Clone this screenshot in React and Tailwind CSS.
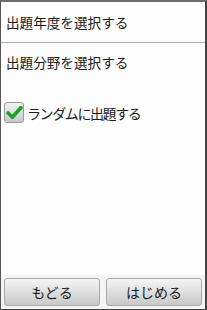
import React from "react";

export default function App() {
  const font = { fontFamily: '"Noto Sans CJK JP", "Noto Sans", sans-serif' };
  return (
    <div
      className="w-[207px] h-[310px] bg-[#fdfdfd] flex flex-col border-t-2 border-t-[#6b6b6b] border-l border-l-[#555] border-r-2 border-r-[#444] border-b border-b-[#444] text-[#1a1a1a]"
      style={font}
    >
      <div className="h-[40px] flex items-center pl-[5px] pt-[2px] text-[13.6px] leading-none">
        出題年度を選択する
      </div>
      <div className="h-px bg-[#b0b0b0]" />
      <div className="h-[40px] flex items-center pl-[5px] text-[13.6px] leading-none">
        出題分野を選択する
      </div>
      <div className="h-[19px]" />
      <div className="flex items-center pl-[3px] gap-[3px]">
        <div className="w-[20px] h-[21px] rounded-[3px] border border-[#9a9a9a] bg-gradient-to-b from-[#f4f4f4] to-[#c8c8c8] flex items-center justify-center">
          <svg width="17" height="15" viewBox="0 0 16 14">
            <path d="M2 7.5 L6 11.5 L14 2.5" fill="none" stroke="#17a424" strokeWidth="3.4" strokeLinecap="round" strokeLinejoin="round" />
          </svg>
        </div>
        <span className="text-[14px] leading-none tracking-[-1.4px]">ランダムに出題する</span>
      </div>
      <div className="flex-1" />
      <div className="flex gap-[6px] px-[3px] pb-[3px] pt-[3px] bg-[#f4f4f4]">
        <button className="flex-1 h-[28px] rounded-[3px] border border-[#a8a8a8] bg-gradient-to-b from-[#f5f5f5] to-[#c9c9c9] text-[14px] text-[#1a1a1a] leading-none">
          もどる
        </button>
        <button className="flex-1 h-[28px] rounded-[3px] border border-[#a8a8a8] bg-gradient-to-b from-[#f5f5f5] to-[#c9c9c9] text-[14px] text-[#1a1a1a] leading-none">
          はじめる
        </button>
      </div>
    </div>
  );
}
